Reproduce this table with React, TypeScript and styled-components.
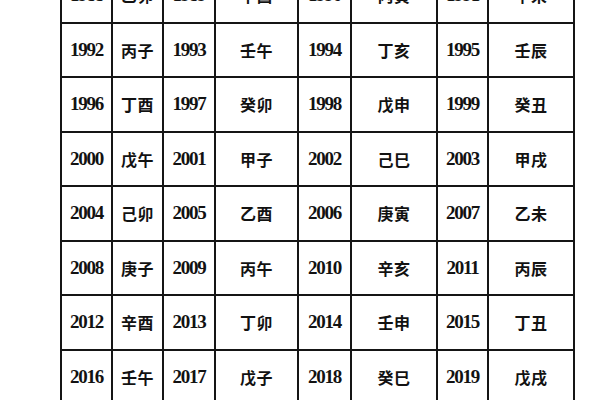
import { createGlobalStyle } from "styled-components"
import styled from "styled-components"

const GlobalStyle = createGlobalStyle`
  html, body {
    margin: 0;
    padding: 0;
    background: #fff;
    overflow: hidden;
  }
`

const Page = styled.div`
  width: 600px;
  height: 400px;
  overflow: hidden;
  background: #fff;
`

// grid lines come from the dark background showing through the gaps
const Table = styled.div`
  margin: -33px 0 0 60px;
  width: 515px;
  display: grid;
  grid-template-columns: 49px 49px 50px 81px 51px 84px 49px 84px;
  grid-auto-rows: 52.5px;
  gap: 2px;
  padding: 2px;
  box-sizing: border-box;
  background: #151515;
`

const Cell = styled.div<{ $year?: boolean }>`
  background: #fff;
  display: flex;
  align-items: center;
  justify-content: center;
  color: #121212;
  font-weight: 700;
  font-family: ${({ $year }) =>
    $year
      ? `"Liberation Serif", "Noto Sans CJK SC", serif`
      : `"Noto Sans CJK SC", "Noto Sans CJK TC", sans-serif`};
  font-size: ${({ $year }) => ($year ? "19px" : "16px")};
  letter-spacing: ${({ $year }) => ($year ? "-1.3px" : "0.5px")};
`

const rows: [number, string][][] = [
  [[1988, "乙卯"], [1989, "辛酉"], [1990, "丙寅"], [1991, "辛未"]],
  [[1992, "丙子"], [1993, "壬午"], [1994, "丁亥"], [1995, "壬辰"]],
  [[1996, "丁酉"], [1997, "癸卯"], [1998, "戊申"], [1999, "癸丑"]],
  [[2000, "戊午"], [2001, "甲子"], [2002, "己巳"], [2003, "甲戌"]],
  [[2004, "己卯"], [2005, "乙酉"], [2006, "庚寅"], [2007, "乙未"]],
  [[2008, "庚子"], [2009, "丙午"], [2010, "辛亥"], [2011, "丙辰"]],
  [[2012, "辛酉"], [2013, "丁卯"], [2014, "壬申"], [2015, "丁丑"]],
  [[2016, "壬午"], [2017, "戊子"], [2018, "癸巳"], [2019, "戊戌"]],
]

export default function App() {
  return (
    <Page>
      <GlobalStyle />
      <Table>
        {rows.map((row) =>
          row.map(([year, name]) => [
            <Cell key={`${year}-y`} $year>{year}</Cell>,
            <Cell key={`${year}-n`}>{name}</Cell>,
          ])
        )}
      </Table>
    </Page>
  )
}
